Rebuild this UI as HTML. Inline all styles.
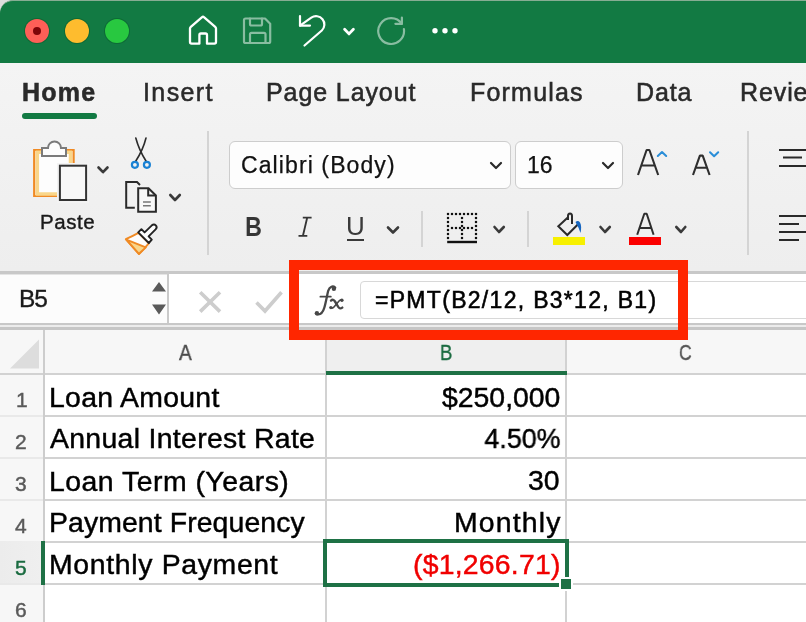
<!DOCTYPE html>
<html><head><meta charset="utf-8">
<style>
*{margin:0;padding:0;box-sizing:border-box}
html,body{width:806px;height:622px;overflow:hidden;background:#f3f3f3;font-family:"Liberation Sans",sans-serif}
.a{position:absolute}
.t{position:absolute;white-space:nowrap;line-height:1;will-change:transform}
#title{left:0;top:0;width:806px;height:63px;background:#127a43;border-top-left-radius:13px;border-top:1px solid #86ad93}
.tab{font-size:25px;color:#2a2a2a;top:80px;letter-spacing:0.9px;-webkit-text-stroke:0.55px #2a2a2a}
.sep{position:absolute;background:#d4d4d4;width:2px}
.box{position:absolute;background:#fdfdfd;border:1px solid #cdcdcd;border-radius:6px}
.cell{font-size:28.4px;color:#000;-webkit-text-stroke:0.45px currentColor}
.rn{font-size:21px;color:#5a5a5a;-webkit-text-stroke:0.45px currentColor}
.hl{position:absolute;height:2px;background:#d2d2d2}
.vl{position:absolute;width:2px;background:#d2d2d2}
svg{position:absolute;left:0;top:0}
</style></head><body>
<div class="a" style="left:0;top:0;width:20px;height:20px;background:#dedede"></div>
<div id="title" class="a"></div>
<div class="a" style="left:0;top:63px;width:806px;height:208px;background:linear-gradient(#f4f4f4,#eeeeee)"></div>
<!-- traffic lights -->
<div class="a" style="left:25px;top:19px;width:24px;height:24px;border-radius:50%;background:#fe5f57;box-shadow:0 0 0 1px #0d6a36"></div>
<div class="a" style="left:33px;top:27px;width:8px;height:8px;border-radius:50%;background:#7e0508"></div>
<div class="a" style="left:65px;top:19px;width:24px;height:24px;border-radius:50%;background:#febc2e;box-shadow:0 0 0 1px #0d6a36"></div>
<div class="a" style="left:105px;top:19px;width:24px;height:24px;border-radius:50%;background:#28c840;box-shadow:0 0 0 1px #0d6a36"></div>

<!-- tabs -->
<div class="t tab" style="left:22px;font-weight:bold;letter-spacing:1.2px">Home</div>
<div class="a" style="left:22px;top:113px;width:75px;height:6px;border-radius:3px;background:#127a43"></div>
<div class="t tab" style="left:142.5px;letter-spacing:1.4px">Insert</div>
<div class="t tab" style="left:266px">Page Layout</div>
<div class="t tab" style="left:470px;letter-spacing:1.2px">Formulas</div>
<div class="t tab" style="left:636px">Data</div>
<div class="t tab" style="left:740px">Review</div>

<!-- ribbon separators -->
<div class="sep" style="left:207px;top:131px;height:124px"></div>
<div class="sep" style="left:747px;top:131px;height:124px"></div>
<div class="sep" style="left:421px;top:211px;height:36px"></div>
<div class="sep" style="left:527px;top:211px;height:36px"></div>

<!-- font boxes -->
<div class="box" style="left:229px;top:141px;width:282px;height:48px"></div>
<div class="t" style="left:241px;top:154px;font-size:23px;color:#111;letter-spacing:1.1px;-webkit-text-stroke:0.25px #111">Calibri (Body)</div>
<div class="box" style="left:515px;top:141px;width:108px;height:48px"></div>
<div class="t" style="left:527px;top:154px;font-size:23px;color:#111;-webkit-text-stroke:0.25px #111">16</div>

<div class="t" style="left:39.5px;top:212.1px;font-size:20.5px;color:#1a1a1a;letter-spacing:0.55px;-webkit-text-stroke:0.4px #1a1a1a">Paste</div>

<div class="t" style="left:244.5px;top:212.5px;font-size:28px;font-weight:bold;color:#353535;transform:scaleX(0.83);transform-origin:0 0">B</div>

<div class="t" style="left:346px;top:213px;font-size:26px;color:#3a3a3a">U</div>
<div class="a" style="left:347px;top:239px;width:17px;height:2px;background:#3a3a3a"></div>

<!-- formula bar -->
<div class="a" style="left:0;top:271px;width:806px;height:59px;background:#fff"></div>
<div class="a" style="left:0;top:271px;width:806px;height:3px;background:#c8c8c8"></div>
<div class="a" style="left:0;top:274px;width:167px;height:1px;background:#e4e4e4"></div>
<div class="a" style="left:0;top:275px;width:167px;height:48px;background:#fcfcfc"></div>
<div class="a" style="left:0;top:323px;width:806px;height:2px;background:#c8c8c8"></div>
<div class="a" style="left:0;top:325px;width:806px;height:2px;background:#ececec"></div>
<div class="a" style="left:0;top:327px;width:806px;height:3px;background:#c6c6c6"></div>
<div class="a" style="left:167px;top:273px;width:2px;height:50px;background:#cacaca"></div>
<div class="t" style="left:19px;top:286.5px;font-size:24.5px;color:#1a1a1a;letter-spacing:-1.2px;-webkit-text-stroke:0.35px #1a1a1a">B5</div>
<div class="a" style="left:360px;top:281px;width:460px;height:38px;border:1px solid #d8d8d8;border-radius:4px;background:#fff"></div>

<div class="t" style="left:375px;top:288.5px;font-size:23px;color:#000;letter-spacing:1.3px;-webkit-text-stroke:0.55px #000">=PMT(B2/12, B3*12, B1)</div>

<!-- grid -->
<div class="a" style="left:0;top:330px;width:806px;height:292px;background:#fff"></div>
<div class="a" style="left:0;top:330px;width:806px;height:43px;background:#f7f7f7"></div>
<div class="a" style="left:326px;top:330px;width:240px;height:43px;background:#efefef"></div>
<div class="a" style="left:0;top:375px;width:43px;height:247px;background:#f7f7f7"></div>
<div class="a" style="left:0;top:541px;width:43px;height:43px;background:linear-gradient(90deg,#ececec,#efefef)"></div>
<div class="hl" style="left:0;top:373px;width:806px"></div>
<div class="hl" style="left:0;top:415px;width:43px;background:#e9e9e9"></div>
<div class="hl" style="left:0;top:457px;width:43px;background:#e9e9e9"></div>
<div class="hl" style="left:0;top:499px;width:43px;background:#e9e9e9"></div>
<div class="hl" style="left:0;top:583px;width:43px;background:#e9e9e9"></div>
<div class="vl" style="left:43px;top:330px;height:292px;background:#cdcdcd"></div>
<div class="vl" style="left:325px;top:330px;height:292px"></div>
<div class="vl" style="left:565px;top:330px;height:292px"></div>
<div class="hl" style="left:45px;top:415px;width:761px"></div>
<div class="hl" style="left:45px;top:457px;width:761px"></div>
<div class="hl" style="left:45px;top:499px;width:761px"></div>
<div class="hl" style="left:45px;top:541px;width:761px"></div>
<div class="hl" style="left:45px;top:583px;width:761px"></div>
<div class="a" style="left:326px;top:371px;width:241px;height:4px;background:#1e7145"></div>
<div class="a" style="left:41px;top:541px;width:4px;height:44px;background:#1e7145"></div>

<div class="t" style="left:179px;top:342.2px;font-size:22px;color:#4a4a4a;-webkit-text-stroke:0.4px currentColor;transform:scaleX(0.87);transform-origin:0 0">A</div>
<div class="t" style="left:439.5px;top:342.2px;font-size:22px;color:#1a6b40;-webkit-text-stroke:0.4px currentColor;transform:scaleX(0.84);transform-origin:0 0">B</div>
<div class="t" style="left:679px;top:342.2px;font-size:22px;color:#555;-webkit-text-stroke:0.4px currentColor;transform:scaleX(0.8);transform-origin:0 0">C</div>

<div class="t rn" style="left:16px;top:388.7px">1</div>
<div class="t rn" style="left:15px;top:430.7px">2</div>
<div class="t rn" style="left:15px;top:472.9px">3</div>
<div class="t rn" style="left:15px;top:515px">4</div>
<div class="t rn" style="left:15px;top:557.4px;color:#1a6b40">5</div>
<div class="t rn" style="left:15px;top:599.4px">6</div>

<div class="t cell" style="left:49px;top:382.5px;letter-spacing:0.3px">Loan Amount</div>
<div class="t cell" style="left:50px;top:424px;letter-spacing:0.32px">Annual Interest Rate</div>
<div class="t cell" style="left:49px;top:466.5px;letter-spacing:0.49px">Loan Term (Years)</div>
<div class="t cell" style="left:49px;top:508px;letter-spacing:0.1px">Payment Frequency</div>
<div class="t cell" style="left:49px;top:549.5px;letter-spacing:0.67px">Monthly Payment</div>

<div class="t cell" style="right:246px;top:383px">$250,000</div>
<div class="t cell" style="right:245px;top:424px;transform:scaleX(0.945);transform-origin:100% 0">4.50%</div>
<div class="t cell" style="right:246px;top:466px">30</div>
<div class="t cell" style="right:244.8px;top:508px;letter-spacing:1.17px">Monthly</div>
<div class="t cell" style="right:245.8px;top:549.5px;color:#f00000;letter-spacing:0.22px">($1,266.71)</div>

<!-- selection -->
<div class="a" style="left:323px;top:539px;width:246px;height:48px;border:4px solid #1e7145"></div>
<div class="a" style="left:559px;top:577px;width:14px;height:14px;background:#fff"></div>
<div class="a" style="left:561px;top:579px;width:10px;height:10px;background:#1e7145"></div>

<!-- red annotation box -->
<div class="a" style="left:289px;top:260px;width:399px;height:80px;border:10px solid #ff2600"></div>

<svg width="806" height="622" viewBox="0 0 806 622">
 <!-- title icons -->
 <g fill="none" stroke="#fff" stroke-width="2.2" stroke-linecap="round" stroke-linejoin="round">
  <path d="M191.6,43.7 Q190,43.7 190,42.1 V28.6 Q190,27.6 190.8,26.9 L201.8,17.3 Q203,16.3 204.2,17.3 L215.2,26.9 Q216,27.6 216,28.6 V42.1 Q216,43.7 214.4,43.7 H207 V35 Q207,33.5 205.5,33.5 H200.9 Q199.4,33.5 199.4,35 V43.7 Z" stroke-width="2.3"/>
  <g opacity="0.5">
   <path d="M244,20 Q244,18.5 245.5,18.5 H265 L270.2,23.7 V41.5 Q270.2,43 268.7,43 H245.5 Q244,43 244,41.5 Z"/>
   <path d="M250,18.5 V24 Q250,25.5 251.5,25.5 H260.5 Q262,25.5 262,24 V18.5"/>
   <path d="M250,43 V34.3 Q250,32.8 251.5,32.8 H264 Q265.5,32.8 265.5,34.3 V43"/>
  </g>
  <path d="M310,25.6 H300 V16"/>
  <path d="M300,25.6 L311.3,17.7 A8.3,8.3 0 0 1 321.8,30.5 L304.5,45.5"/>
  <path d="M344.6,29.3 L349,33.9 L353.4,29.3" stroke-width="2.8"/>
  <g opacity="0.5">
   <path d="M401.8,23.8 A12.9,12.9 0 1 0 403.9,29.2"/>
   <path d="M401.9,17.6 V23.8 H395.4"/>
  </g>
 </g>
 <g fill="#fff"><circle cx="435" cy="30.8" r="2.7"/><circle cx="445" cy="30.8" r="2.7"/><circle cx="455" cy="30.8" r="2.7"/></g>

 <!-- paste -->
 <path d="M34.2,150 H73.6 V196 H34.2 Z" fill="#fbfbfb" stroke="#f08a24" stroke-width="2.2"/>
 <path d="M37.3,152.2 H70.5 V194 H37.3 Z" fill="#fdfdfd" stroke="#f9d68a" stroke-width="3.5"/>
 <path d="M42,148 H48 A6.5,6.5 0 0 1 61,148 H66 V156 H42 Z" fill="#fdfdfd" stroke="#7b7b7b" stroke-width="2"/>
 <rect x="57" y="163" width="32" height="40" fill="#f3f3f3"/>
 <rect x="59.9" y="165.7" width="26.2" height="34.3" fill="#f8f8f8" stroke="#333" stroke-width="2"/>
 <g fill="none" stroke="#3a3a3a" stroke-width="2.6" stroke-linecap="round" stroke-linejoin="round">
  <path d="M98.5,167.5 L103,172.2 L107.5,167.5"/>
  <path d="M170.3,195 L175,200 L179.8,195"/>
  <path d="M388,227.5 L393,232.5 L398,227.5"/>
  <path d="M494.5,227 L499,232 L503.8,227"/>
  <path d="M600.5,227 L605,232 L609.8,227"/>
  <path d="M676.3,227 L681,232 L685.3,227"/>
 </g>
 <!-- scissors -->
 <g fill="none" stroke="#2b2b2b" stroke-width="1.6" stroke-linecap="round">
  <path d="M135.8,138 Q139,150 146,161"/>
  <path d="M146,138 Q143,150 135.8,161"/>
 </g>
 <g fill="none" stroke="#1a82d4" stroke-width="2.2"><circle cx="134.9" cy="164.8" r="3"/><circle cx="146.9" cy="164.8" r="3"/></g>
 <!-- copy -->
 <g fill="none" stroke="#2a2a2a" stroke-width="2" stroke-linejoin="miter">
  <path d="M134.8,207.7 H126.2 V182.1 H137 L140,185"/>
  <path d="M138.2,188.2 H148.5 L155.9,195.5 V211.8 H138.2 Z" fill="#f8f8f8"/>
  <path d="M148.2,188.2 V195.5 H155.9"/>
 </g>
 <g stroke="#777" stroke-width="1.6"><path d="M143,202 H150.8 M143,205.8 H150.8"/></g>
 <!-- format painter -->
 <path d="M125.8,239.2 Q131.5,236.6 138.4,232.8 L149,243.2 Q144.5,248.5 139,254 Z" fill="#fdfdfd" stroke="#f08a24" stroke-width="1.9" stroke-linejoin="round"/>
 <path d="M126.3,239.6 L145.8,247.4 L139,253.8 Z" fill="#f9d68a" stroke="#f08a24" stroke-width="1.9" stroke-linejoin="round"/>
 <path d="M138.2,232.4 L141.4,229.2 L144.6,232.4 L151.6,225.6 Q154,223.6 155.8,225.4 Q157.6,227.4 155.6,229.4 L148.6,236.4 L151.8,239.6 L148.8,243 Z" fill="#fdfdfd" stroke="#222" stroke-width="1.9" stroke-linejoin="round"/>

 <!-- font box chevrons -->
 <g fill="none" stroke="#2a2a2a" stroke-width="2.2" stroke-linecap="round" stroke-linejoin="round">
  <path d="M491,163 L496,168 L501,163"/>
  <path d="M603,163 L608,168 L613,163"/>
 </g>
 <!-- grow/shrink A -->
 <g fill="none" stroke="#2e2e2e" stroke-width="2.1" stroke-linejoin="bevel">
  <path d="M638,175 L646.6,150 H649.4 L658.2,175 M641.6,165.5 H654.6"/>
  <path d="M693,175 L699.9,155.6 H702.7 L709.6,175 M695.9,167.7 H706.7"/>
 </g>
 <g fill="none" stroke="#2a8ed8" stroke-width="2" stroke-linecap="round" stroke-linejoin="round">
  <path d="M657.8,156 L662,152 L666.2,156"/>
  <path d="M710,152.2 L714.1,156.3 L718.2,152.2"/>
 </g>
 <!-- align icons -->
 <g stroke="#2a2a2a" stroke-width="2.2">
  <path d="M779,150 H806 M783,157.5 H802 M779,166 H806"/>
  <path d="M779,216 H806 M779,224 H799 M779,232 H806 M779,240 H799"/>
 </g>
 <!-- italic I -->
 <path d="M302.8,217.6 H311.6 M307.2,217.6 L302.9,235.9 M298.5,235.9 H307.3" fill="none" stroke="#353535" stroke-width="1.9"/>
 <!-- borders icon -->
 <g fill="#111"><rect x="446.9" y="212.9" width="2.2" height="2.2"/><rect x="450.9" y="212.9" width="2.2" height="2.2"/><rect x="454.9" y="212.9" width="2.2" height="2.2"/><rect x="458.9" y="212.9" width="2.2" height="2.2"/><rect x="462.9" y="212.9" width="2.2" height="2.2"/><rect x="466.9" y="212.9" width="2.2" height="2.2"/><rect x="470.9" y="212.9" width="2.2" height="2.2"/><rect x="474.9" y="212.9" width="2.2" height="2.2"/><rect x="446.9" y="216.9" width="2.2" height="2.2"/><rect x="474.9" y="216.9" width="2.2" height="2.2"/><rect x="446.9" y="220.9" width="2.2" height="2.2"/><rect x="474.9" y="220.9" width="2.2" height="2.2"/><rect x="446.9" y="224.9" width="2.2" height="2.2"/><rect x="474.9" y="224.9" width="2.2" height="2.2"/><rect x="446.9" y="228.9" width="2.2" height="2.2"/><rect x="474.9" y="228.9" width="2.2" height="2.2"/><rect x="446.9" y="232.9" width="2.2" height="2.2"/><rect x="474.9" y="232.9" width="2.2" height="2.2"/><rect x="446.9" y="236.9" width="2.2" height="2.2"/><rect x="474.9" y="236.9" width="2.2" height="2.2"/><rect x="450.9" y="226.9" width="2.2" height="2.2"/><rect x="454.9" y="226.9" width="2.2" height="2.2"/><rect x="458.9" y="226.9" width="2.2" height="2.2"/><rect x="462.9" y="226.9" width="2.2" height="2.2"/><rect x="466.9" y="226.9" width="2.2" height="2.2"/><rect x="470.9" y="226.9" width="2.2" height="2.2"/><rect x="460.9" y="216.9" width="2.2" height="2.2"/><rect x="460.9" y="220.9" width="2.2" height="2.2"/><rect x="460.9" y="224.9" width="2.2" height="2.2"/><rect x="460.9" y="228.9" width="2.2" height="2.2"/><rect x="460.9" y="232.9" width="2.2" height="2.2"/><rect x="460.9" y="236.9" width="2.2" height="2.2"/></g>
 <rect x="447.2" y="240.8" width="29.8" height="2.4" fill="#111"/>
 <!-- fill bucket -->
 <path d="M567.8,217.6 L558.3,226.3 L567.3,235 L577.8,224.5" fill="none" stroke="#2a2a2a" stroke-width="2" stroke-linejoin="miter"/>
 <path d="M568,220 V216 Q568,213.5 570,213.5 Q572,213.5 572,216 V224" fill="none" stroke="#2a2a2a" stroke-width="2"/>
 <path d="M575.5,222 Q578,220 580,222.5 Q582,226 580.5,233 Q579,228 576.5,224 Z" fill="#1565c0"/>
 <rect x="553" y="237" width="32" height="8" fill="#f7f000"/>
 <!-- font color -->
 <path d="M637.2,234.8 L644.3,213.8 H646.7 L653.6,234.8 M640.2,228 H651" fill="none" stroke="#2e2e2e" stroke-width="2" stroke-linejoin="bevel"/>
 <rect x="629" y="237" width="32" height="8" fill="#fb0000"/>
 <!-- name box arrows -->
 <path d="M152,291.5 L159,282 L166,291.5 Z M152,304.5 L159,314.5 L166,304.5 Z" fill="#5a5a5a"/>
 <!-- cancel / enter -->
 <g fill="none" stroke="#cdcdcd" stroke-width="3.6">
  <path d="M200.2,292.2 L220,311.6 M220,292.2 L200.2,311.6"/>
  <path d="M256.5,302.5 L265,311 L281.5,292.3"/>
 </g>
 <!-- fx -->
 <g fill="none" stroke="#474747" stroke-linecap="round">
  <path d="M335.2,287.6 C333,285.6 329.6,286.2 328.2,290.8 C327.2,294.6 325.8,302.6 324.3,307.8 C322.8,312.8 319.8,314.8 317.2,314.3" stroke-width="2.3"/>
  <path d="M320.4,296.7 H330.8" stroke-width="1.8"/>
  <path d="M331,300.6 Q333.2,298.6 335,301.5 L338.3,307 Q339.8,309.4 342.3,307.6" stroke-width="2.4"/>
  <path d="M342,300.4 Q340.6,299.2 338.8,301.2 L334.2,306.8 Q332.6,308.8 330.8,307.8" stroke-width="1.6"/>
 </g>
 <g fill="#474747"><circle cx="333.9" cy="288.7" r="2.2"/><circle cx="316.9" cy="313.2" r="2.2"/><circle cx="341.9" cy="300.3" r="1.7"/><circle cx="330.9" cy="307.6" r="1.7"/></g>
 <!-- select all triangle -->
 <path d="M39,339.5 V368.5 H10 Z" fill="#dddddd"/>
</svg>
</body></html>
